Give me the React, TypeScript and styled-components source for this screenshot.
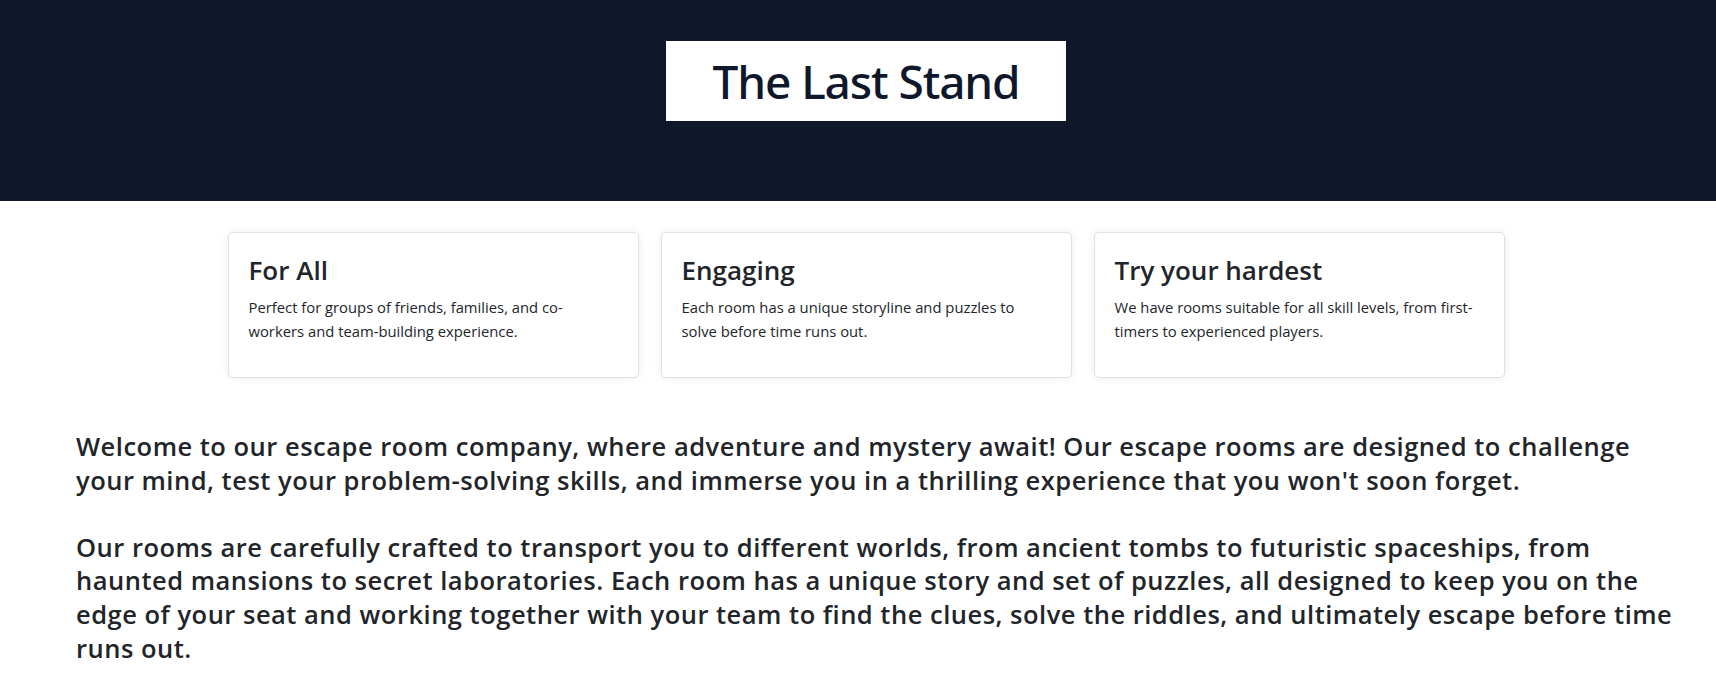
import { FC } from 'react'
import styled, { createGlobalStyle } from 'styled-components'

const features = [
  {
    title: 'For All',
    text: 'Perfect for groups of friends, families, and co-workers and team-building experience.',
  },
  {
    title: 'Engaging',
    text: 'Each room has a unique storyline and puzzles to solve before time runs out.',
  },
  {
    title: 'Try your hardest',
    text: 'We have rooms suitable for all skill levels, from first-timers to experienced players.',
  },
]

const App: FC = () => {
  return (
    <>
      <GlobalStyle />
      <Header>
        <TitleBox>
          <Title>The Last Stand</Title>
        </TitleBox>
      </Header>

      <Features>
        {features.map((f) => (
          <Card key={f.title}>
            <CardTitle>{f.title}</CardTitle>
            <CardText>{f.text}</CardText>
          </Card>
        ))}
      </Features>

      <Intro>
        Welcome to our escape room company, where adventure and mystery await!
        Our escape rooms are designed to challenge your mind, test your
        problem-solving skills, and immerse you in a thrilling experience that
        you won't soon forget.
        <br />
        <br />
        Our rooms are carefully crafted to transport you to different worlds,
        from ancient tombs to futuristic spaceships, from haunted mansions to
        secret laboratories. Each room has a unique story and set of puzzles,
        all designed to keep you on the edge of your seat and working together
        with your team to find the clues, solve the riddles, and ultimately
        escape before time runs out.
      </Intro>
    </>
  )
}

const GlobalStyle = createGlobalStyle`
  body {
    margin: 0;
    background: #fff;
    color: #212529;
    font-family: 'Open Sans', 'Noto Sans', sans-serif;
  }
`

const Header = styled.header`
  display: flex;
  justify-content: center;
  align-items: flex-start;
  height: 201px;
  box-sizing: border-box;
  padding: 41px 0 0 16px;
  background-color: #0f172a;
`

const TitleBox = styled.div`
  display: flex;
  justify-content: center;
  align-items: center;
  width: 400px;
  height: 80px;
  background-color: #fff;
`

const Title = styled.h1`
  margin: 0;
  color: #0f172a;
  font-family: 'Noto Sans', sans-serif;
  font-size: 46px;
  font-weight: 500;
  letter-spacing: -1.1px;
  line-height: 1;
`

const Features = styled.section`
  display: grid;
  grid-template-columns: repeat(3, 411px);
  justify-content: center;
  gap: 22px;
  margin-top: 31px;
  padding-left: 16px;
`

const Card = styled.div`
  box-sizing: border-box;
  height: 146px;
  padding: 22px 25px 20px 20px;
  border: 1px solid #dee2e6;
  border-radius: 5px;
  background: #fff;
  box-shadow: 0 0 8px rgba(0, 0, 0, 0.08);
`

const CardTitle = styled.h3`
  margin: 0 0 9px;
  font-size: 26px;
  font-weight: 600;
  line-height: 1.2;
`

const CardText = styled.p`
  margin: 0;
  font-size: 14.8px;
  line-height: 24px;
`

const Intro = styled.p`
  margin: 52px 28px 0 76px;
  font-size: 25.5px;
  font-weight: 600;
  letter-spacing: 0.5px;
  line-height: 33.6px;
`

export default App
